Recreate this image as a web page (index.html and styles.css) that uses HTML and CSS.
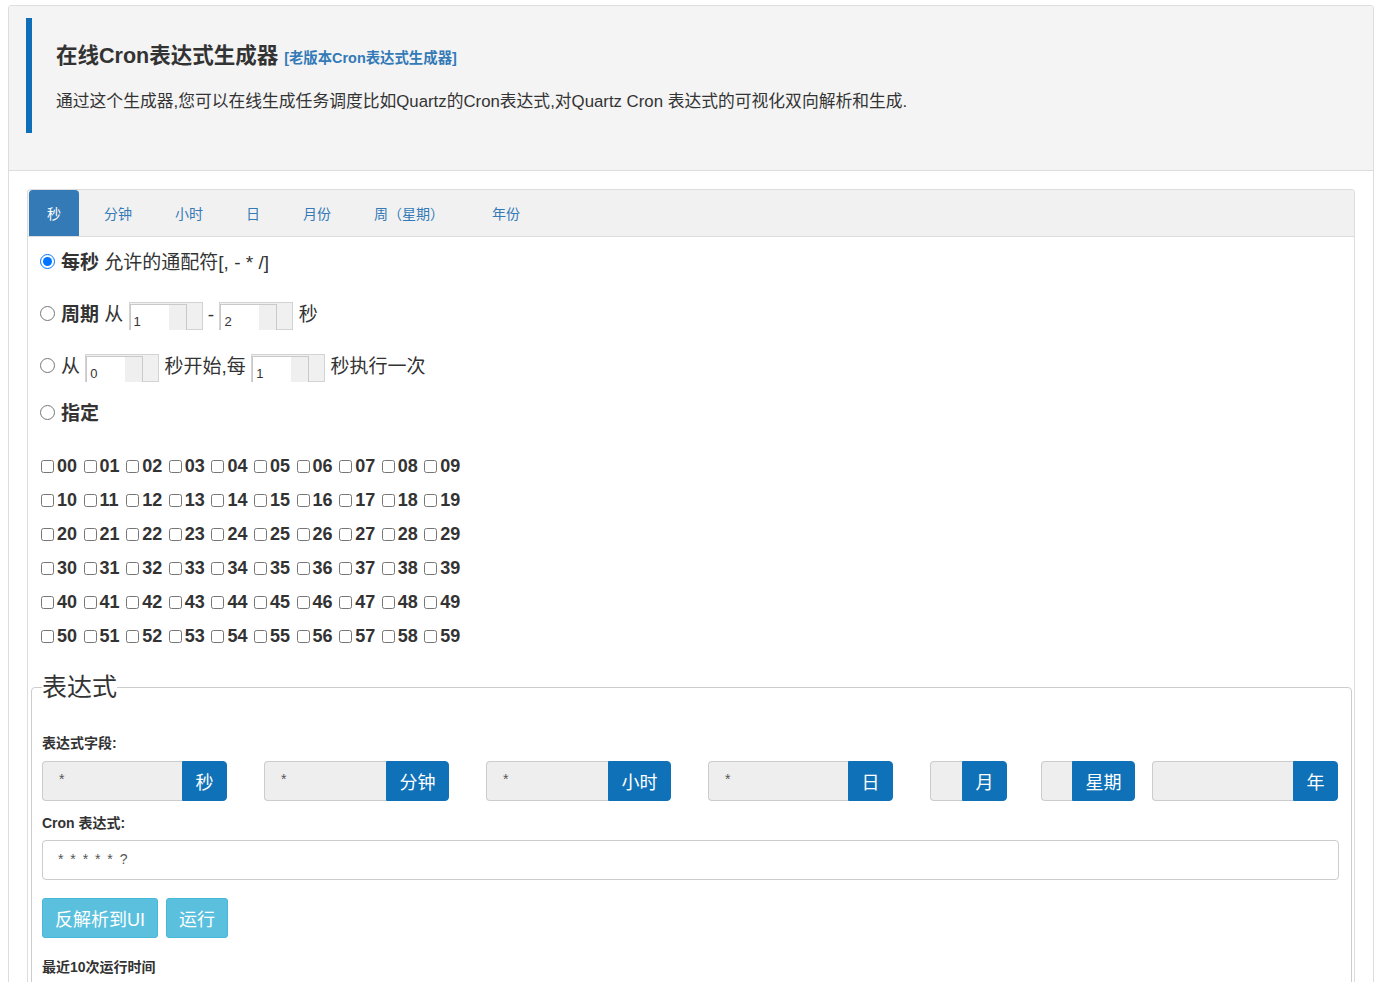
FILE: index.html
```html
<!DOCTYPE html>
<html lang="zh-CN">
<head>
<meta charset="utf-8">
<title>在线Cron表达式生成器</title>
<link rel="stylesheet" href="styles.css">
</head>
<body>
<div class="page">
  <div class="header">
    <div class="bq">
      <h1 class="title">在线Cron表达式生成器 <a class="old" href="#">[老版本Cron表达式生成器]</a></h1>
      <p class="desc">通过这个生成器,您可以在线生成任务调度比如Quartz的Cron表达式,对Quartz Cron 表达式的可视化双向解析和生成.</p>
    </div>
  </div>
  <div class="main">
    <div class="panel">
      <ul class="tabs">
        <li class="tab active">秒</li>
        <li class="tab">分钟</li>
        <li class="tab">小时</li>
        <li class="tab">日</li>
        <li class="tab">月份</li>
        <li class="tab">周（星期）</li>
        <li class="tab tab-last">年份</li>
      </ul>
      <div class="choices">
        <div class="opt"><input type="radio" name="sec" class="rd" checked><b>每秒</b> 允许的通配符[, - * /]</div>
        <div class="opt"><input type="radio" name="sec" class="rd"><b>周期</b> 从 <span class="num"><input class="num-in" value="1"></span> - <span class="num"><input class="num-in" value="2"></span> 秒</div>
        <div class="opt"><input type="radio" name="sec" class="rd">从 <span class="num"><input class="num-in" value="0"></span> 秒开始,每 <span class="num"><input class="num-in" value="1"></span> 秒执行一次</div>
        <div class="opt opt-short"><input type="radio" name="sec" class="rd"><b>指定</b></div>
        <div class="checks">
          <div class="crow">
            <label class="ck"><input type="checkbox">00</label><label class="ck"><input type="checkbox">01</label><label class="ck"><input type="checkbox">02</label><label class="ck"><input type="checkbox">03</label><label class="ck"><input type="checkbox">04</label><label class="ck"><input type="checkbox">05</label><label class="ck"><input type="checkbox">06</label><label class="ck"><input type="checkbox">07</label><label class="ck"><input type="checkbox">08</label><label class="ck"><input type="checkbox">09</label>
          </div>
          <div class="crow">
            <label class="ck"><input type="checkbox">10</label><label class="ck"><input type="checkbox">11</label><label class="ck"><input type="checkbox">12</label><label class="ck"><input type="checkbox">13</label><label class="ck"><input type="checkbox">14</label><label class="ck"><input type="checkbox">15</label><label class="ck"><input type="checkbox">16</label><label class="ck"><input type="checkbox">17</label><label class="ck"><input type="checkbox">18</label><label class="ck"><input type="checkbox">19</label>
          </div>
          <div class="crow">
            <label class="ck"><input type="checkbox">20</label><label class="ck"><input type="checkbox">21</label><label class="ck"><input type="checkbox">22</label><label class="ck"><input type="checkbox">23</label><label class="ck"><input type="checkbox">24</label><label class="ck"><input type="checkbox">25</label><label class="ck"><input type="checkbox">26</label><label class="ck"><input type="checkbox">27</label><label class="ck"><input type="checkbox">28</label><label class="ck"><input type="checkbox">29</label>
          </div>
          <div class="crow">
            <label class="ck"><input type="checkbox">30</label><label class="ck"><input type="checkbox">31</label><label class="ck"><input type="checkbox">32</label><label class="ck"><input type="checkbox">33</label><label class="ck"><input type="checkbox">34</label><label class="ck"><input type="checkbox">35</label><label class="ck"><input type="checkbox">36</label><label class="ck"><input type="checkbox">37</label><label class="ck"><input type="checkbox">38</label><label class="ck"><input type="checkbox">39</label>
          </div>
          <div class="crow">
            <label class="ck"><input type="checkbox">40</label><label class="ck"><input type="checkbox">41</label><label class="ck"><input type="checkbox">42</label><label class="ck"><input type="checkbox">43</label><label class="ck"><input type="checkbox">44</label><label class="ck"><input type="checkbox">45</label><label class="ck"><input type="checkbox">46</label><label class="ck"><input type="checkbox">47</label><label class="ck"><input type="checkbox">48</label><label class="ck"><input type="checkbox">49</label>
          </div>
          <div class="crow">
            <label class="ck"><input type="checkbox">50</label><label class="ck"><input type="checkbox">51</label><label class="ck"><input type="checkbox">52</label><label class="ck"><input type="checkbox">53</label><label class="ck"><input type="checkbox">54</label><label class="ck"><input type="checkbox">55</label><label class="ck"><input type="checkbox">56</label><label class="ck"><input type="checkbox">57</label><label class="ck"><input type="checkbox">58</label><label class="ck"><input type="checkbox">59</label>
          </div>
        </div>
      </div>
      <fieldset class="expr">
        <legend class="legend">表达式</legend>
        <div class="flabel">表达式字段:</div>
        <div class="groups">
          <div class="ig ig-wide"><span class="ig-field">*</span><span class="ig-addon">秒</span></div>
          <div class="ig ig-wide"><span class="ig-field">*</span><span class="ig-addon">分钟</span></div>
          <div class="ig ig-wide"><span class="ig-field">*</span><span class="ig-addon">小时</span></div>
          <div class="ig ig-wide"><span class="ig-field">*</span><span class="ig-addon">日</span></div>
          <div class="ig ig-mon"><span class="ig-field"></span><span class="ig-addon">月</span></div>
          <div class="ig ig-week"><span class="ig-field"></span><span class="ig-addon">星期</span></div>
          <div class="ig ig-year"><span class="ig-field"></span><span class="ig-addon">年</span></div>
        </div>
        <div class="flabel flabel-cron">Cron 表达式:</div>
        <div class="cron">* * * * * ?</div>
        <div class="btns">
          <button class="btn">反解析到UI</button>
          <button class="btn">运行</button>
        </div>
        <div class="flabel flabel-runs">最近10次运行时间</div>
      </fieldset>
    </div>
  </div>
</div>
</body>
</html>
```

FILE: styles.css
```css
* { box-sizing: border-box; }

body {
  margin: 0;
  background: #fff;
  color: #333;
  font-family: "Liberation Sans", "Noto Sans CJK SC", sans-serif;
  font-size: 14px;
}

.page {
  margin: 5px 9px 0 8px;
  border: 1px solid #ddd;
  border-bottom: none;
  border-radius: 4px 4px 0 0;
}

.header {
  background: #f4f4f4;
  border-bottom: 1px solid #ddd;
  border-radius: 4px 4px 0 0;
  padding: 12px 17px 37px;
}

.bq {
  border-left: 6px solid #0e6fb8;
  padding-left: 24px;
  height: 115px;
}

.title {
  margin: 0;
  padding-top: 27px;
  font-size: 21.5px;
  line-height: 22px;
  font-weight: bold;
  color: #333;
}

.old {
  font-size: 14.4px;
  color: #337ab7;
  text-decoration: none;
}

.desc {
  margin: 21px 0 0;
  font-size: 16.8px;
  line-height: 24px;
}

.main {
  padding: 18px 18px 0;
}

.panel {
  border: 1px solid #ddd;
  border-bottom: none;
  border-radius: 4px 4px 0 0;
  padding-bottom: 40px;
}

.tabs {
  display: flex;
  margin: 0;
  padding: 0 0 0 1px;
  list-style: none;
  background: #f1f1f1;
  border-bottom: 1px solid #ddd;
  border-radius: 4px 4px 0 0;
  height: 47px;
}

.tab {
  height: 46px;
  padding: 2px 18px 0;
  margin-right: 7px;
  line-height: 44px;
  font-size: 14px;
  color: #337ab7;
}

.tab.active {
  background: #337ab7;
  color: #fff;
  border-radius: 4px 4px 0 0;
}

.tab-last {
  margin-left: 5px;
}

.choices {
  padding-left: 12px;
}

.opt {
  height: 52px;
  line-height: 52px;
  font-size: 19px;
  white-space: nowrap;
}

.opt-short {
  height: 42px;
  line-height: 42px;
}

.rd {
  width: 15px;
  height: 15px;
  margin: 0 6px 0 0;
  vertical-align: middle;
  position: relative;
  top: -2px;
}

.num {
  display: inline-block;
  width: 74px;
  height: 28px;
  border: 1px solid #d3d3d3;
  background: #f0f0f0;
  vertical-align: middle;
  line-height: normal;
}

.num-in {
  display: block;
  width: 57px;
  height: 26px;
  margin: 1px 0 0 0;
  border: 1px solid #c9c9c9;
  border-bottom: none;
  background: linear-gradient(90deg, #fff 0 38px, #efefef 38px);
  font: 13px "Liberation Sans", sans-serif;
  color: #333;
  padding: 9px 0 0 3px;
  outline: none;
}

.checks {
  margin-top: 14px;
}

.crow {
  display: grid;
  grid-template-columns: repeat(10, 42.6px);
  height: 34px;
  align-items: center;
}

.ck {
  display: flex;
  align-items: center;
  font-size: 18px;
  font-weight: bold;
  line-height: 20px;
}

.ck input {
  width: 13px;
  height: 13px;
  margin: 0 3px 0 1px;
}

.expr {
  margin: 19px 2px 0 3px;
  border: 1px solid #ccc;
  border-radius: 4px;
  padding: 0 12px 60px 10px;
  min-width: 0;
}

.legend {
  padding: 0;
  font-size: 25px;
  line-height: 30px;
  color: #333;
}

.flabel {
  margin: 31px 0 8px;
  font-size: 14px;
  font-weight: bold;
  line-height: 20px;
}

.flabel-cron {
  margin: 12px 0 7px;
}

.flabel-runs {
  margin: 19px 0 0;
}

.groups {
  display: flex;
  height: 40px;
}

.ig {
  display: flex;
  height: 40px;
  margin-right: 37px;
}

.ig-wide { width: 185px; }
.ig-mon { width: 77px; margin-right: 34px; }
.ig-week { width: 94px; margin-right: 17px; }
.ig-year { width: 186px; margin-right: 0; }

.ig-field {
  flex: 1;
  background: #eee;
  border: 1px solid #ccc;
  border-right: none;
  border-radius: 4px 0 0 4px;
  padding-left: 16px;
  line-height: 34px;
  font-size: 14px;
  color: #555;
}

.ig-addon {
  display: flex;
  align-items: center;
  justify-content: center;
  padding: 0 12.5px;
  background: #0f71b7;
  border: 1px solid #0f71b7;
  border-radius: 0 4px 4px 0;
  color: #fff;
  font-size: 18px;
}

.cron {
  height: 40px;
  border: 1px solid #ccc;
  border-radius: 4px;
  padding: 0 15px;
  line-height: 36px;
  font-size: 14px;
  letter-spacing: 1.5px;
  color: #555;
}

.btns {
  display: flex;
  gap: 8px;
  margin-top: 18px;
}

.btn {
  height: 40px;
  padding: 0 12px;
  background: #5bc0de;
  border: 1px solid #46b8da;
  border-radius: 3px;
  color: #fff;
  font-family: "Liberation Sans", "Noto Sans CJK SC", sans-serif;
  font-size: 18px;
}
```
